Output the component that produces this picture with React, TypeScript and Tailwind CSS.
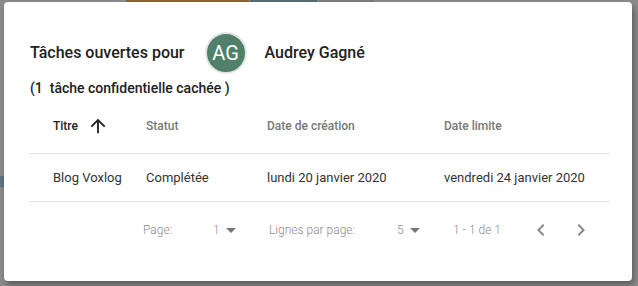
import React from 'react';

const ArrowUp: React.FC = () => (
  <svg width="22" height="22" viewBox="0 0 24 24" fill="#222">
    <path d="M4 12l1.41 1.41L11 7.83V20h2V7.83l5.58 5.59L20 12l-8-8-8 8z" />
  </svg>
);

const DropTriangle: React.FC = () => (
  <svg width="10" height="5" viewBox="0 0 10 5" fill="#777">
    <path d="M0 0l5 5 5-5z" />
  </svg>
);

const Chevron: React.FC<{ dir: 'left' | 'right' }> = ({ dir }) => (
  <svg width="24" height="24" viewBox="0 0 24 24" fill="#8a8a8a">
    {dir === 'left' ? (
      <path d="M15.41 7.41L14 6l-6 6 6 6 1.41-1.41L10.83 12z" />
    ) : (
      <path d="M10 6L8.59 7.41 13.17 12l-4.58 4.59L10 18l6-6z" />
    )}
  </svg>
);

const columns = ['Titre', 'Statut', 'Date de création', 'Date limite'];
const row = ['Blog Voxlog', 'Complétée', 'lundi 20 janvier 2020', 'vendredi 24 janvier 2020'];
const grid = 'grid grid-cols-[93px_121px_177px_189px]';

const App: React.FC = () => {
  return (
    <div
      className="relative w-[638px] h-[286px] overflow-hidden bg-[#8b8b8b] pt-[2px] pl-[4px]"
      style={{ fontFamily: 'Roboto, "Noto Sans", sans-serif' }}
    >
      {/* page content behind the backdrop */}
      <div className="absolute top-0 left-[126px] w-[123px] h-[2px] bg-[#8c6536]" />
      <div className="absolute top-0 left-[250px] w-[67px] h-[2px] bg-[#586c75]" />
      <div className="absolute top-0 left-[318px] w-[56px] h-[2px] bg-[#7e7e7e]" />
      <div className="absolute top-[176px] left-0 w-[4px] h-[11px] bg-[#5f7682]" />

      {/* dialog */}
      <div className="relative w-[628px] h-[279px] rounded-[4px] bg-white shadow-[2px_4px_6px_rgba(0,0,0,0.35)]">
        <div className="pl-[26px] pt-[30px]">
          <div className="flex h-[42px] items-center text-[16px] font-medium text-[#212121]">
            <span>Tâches ouvertes pour</span>
            <div className="ml-[20px] flex h-[42px] w-[42px] items-center justify-center rounded-full border-2 border-[#e4e4e4] bg-[#50806a] text-[20px] font-normal text-white">
              AG
            </div>
            <span className="ml-[18px]">Audrey Gagné</span>
          </div>
          <div className="mt-[5px] h-[19px] text-[14px] font-medium leading-[19px] text-[#212121] whitespace-pre">
            (1  tâche confidentielle cachée )
          </div>
        </div>

        <div className="ml-[25px] w-[580px]">
          <div className={`${grid} h-[56px] items-center border-b border-[#e0e0e0] text-[12px] font-medium`}>
            {columns.map((c, i) => (
              <div key={c} className={`flex items-center pl-6 ${i === 0 ? 'text-[#222]' : 'text-[#777]'}`}>
                <span>{c}</span>
                {i === 0 && (
                  <span className="ml-[9px] flex">
                    <ArrowUp />
                  </span>
                )}
              </div>
            ))}
          </div>
          <div className={`${grid} h-[48px] items-center border-b border-[#e0e0e0] text-[13px] text-[#333]`}>
            {row.map((c) => (
              <div key={c} className="pl-6">
                {c}
              </div>
            ))}
          </div>

          <div className="flex h-[56px] items-center pl-[114px] text-[12px] font-light text-[#8c8c8c]">
            <span className="w-[70px]">Page:</span>
            <div className="flex w-[56px] items-center">
              <span>1</span>
              <span className="ml-[6px] flex">
                <DropTriangle />
              </span>
            </div>
            <span className="w-[128px]">Lignes par page:</span>
            <div className="flex w-[56px] items-center">
              <span>5</span>
              <span className="ml-[6px] flex">
                <DropTriangle />
              </span>
            </div>
            <span className="w-[76px]">1 - 1 de 1</span>
            <Chevron dir="left" />
            <span className="w-[16px]" />
            <Chevron dir="right" />
          </div>
        </div>
      </div>
    </div>
  );
};

export default App;
